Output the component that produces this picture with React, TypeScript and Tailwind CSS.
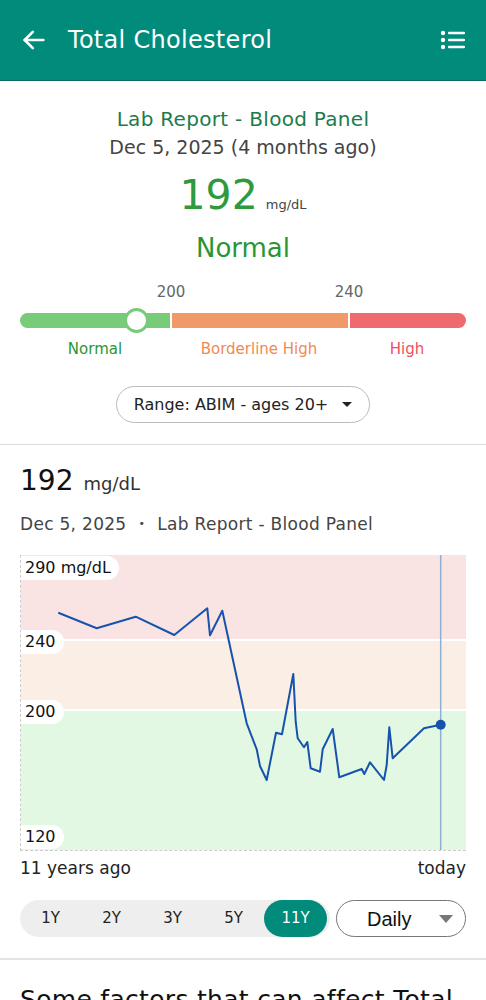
import React from "react";

const points: [number, number][] = [
  [58.3, 612.7], [96.7, 628.3], [135.7, 616.7], [174.3, 635], [207.3, 608.3],
  [210, 635.3], [222.3, 610.7], [246.7, 723.3], [256.7, 749.3], [260, 766],
  [266.7, 780], [276, 732.7], [282, 734.3], [293.3, 674], [295.7, 721.7],
  [297.7, 738.3], [304, 747.3], [307.3, 742], [310.7, 768.3], [320, 771.7],
  [322.7, 749.3], [332.7, 729], [339.3, 777.3], [361.7, 769], [364.3, 774],
  [370, 762.3], [384, 780], [386.7, 765], [389.3, 727.3], [392.7, 758.3],
  [424, 728.3], [440.7, 724.7],
];

const linePath = points
  .map(([x, y], i) => `${i === 0 ? "M" : "L"}${(x - 20).toFixed(1)} ${(y - 555).toFixed(1)}`)
  .join(" ");

const periods = ["1Y", "2Y", "3Y", "5Y", "11Y"];

const Header = () => (
  <div className="flex h-[81px] items-center justify-between border-b border-[#0b6e63] bg-[#008b7b] px-[20px] text-white">
    <div className="flex items-center gap-[20px]">
      <svg width="28" height="28" viewBox="0 0 24 24" fill="none" stroke="currentColor" strokeWidth="2.2" strokeLinecap="round" strokeLinejoin="round">
        <path d="M20 12H4" />
        <path d="M11 5l-7 7 7 7" />
      </svg>
      <span className="text-[24px] tracking-[0.3px]">Total Cholesterol</span>
    </div>
    <svg width="26" height="22" viewBox="0 0 26 22" fill="white">
      <circle cx="3" cy="4" r="2.2" />
      <circle cx="3" cy="11" r="2.2" />
      <circle cx="3" cy="18" r="2.2" />
      <rect x="8" y="2.8" width="17" height="2.5" rx="1" />
      <rect x="8" y="9.8" width="17" height="2.5" rx="1" />
      <rect x="8" y="16.8" width="17" height="2.5" rx="1" />
    </svg>
  </div>
);

const Summary = () => (
  <section className="flex flex-col items-center border-b border-[#dcdcdc] px-[20px] pb-[21px] pt-[24px]">
    <div className="text-[20px] leading-[28px] tracking-[0.3px] text-[#1d7b4b]">Lab Report - Blood Panel</div>
    <div className="text-[19px] leading-[28px] text-[#444]">Dec 5, 2025 (4 months ago)</div>
    <div className="mt-[6px] flex items-baseline gap-[8px] text-[#2f9a3c]">
      <span className="text-[41px] leading-[56px]">192</span>
      <span className="text-[13px] text-[#444]">mg/dL</span>
    </div>
    <div className="mt-[6px] text-[26px] leading-[38px] text-[#2a9633]">Normal</div>

    <div className="mt-[14px] w-full">
      <div className="relative h-[22px] text-[15px] text-[#666]">
        <span className="absolute left-[131px] w-[40px] text-center">200</span>
        <span className="absolute left-[309px] w-[40px] text-center">240</span>
      </div>
      <div className="relative mt-[10px] flex h-[15px] w-full gap-[2px]">
        <div className="w-[150px] rounded-l-full bg-[#78cb78]" />
        <div className="w-[176px] bg-[#f09a69]" />
        <div className="flex-1 rounded-r-full bg-[#ef6a6c]" />
        <div className="absolute left-[104px] top-[-5px] h-[25px] w-[25px] rounded-full border-[3px] border-[#78cb78] bg-white" />
      </div>
      <div className="mt-[11px] flex text-[15px] leading-[20px]">
        <div className="w-[150px] text-center text-[#2a9633]">Normal</div>
        <div className="w-[178px] text-center text-[#ef8a53]">Borderline High</div>
        <div className="flex-1 text-center text-[#ee5060]">High</div>
      </div>
    </div>

    <button className="mt-[27px] flex h-[37px] items-center gap-[14px] rounded-full border border-[#bbb] px-[17px] text-[16px] text-[#222]">
      <span>Range: ABIM - ages 20+</span>
      <svg width="10" height="6" viewBox="0 0 10 6" fill="#222">
        <path d="M0 0h10L5 5z" />
      </svg>
    </button>
  </section>
);

const Label = ({ top, children }: { top: string; children: React.ReactNode }) => (
  <div className={`absolute left-0 ${top} rounded-r-full bg-white py-[1px] pl-[4px] pr-[8px] text-[16px] leading-[22px] text-[#111]`}>
    {children}
  </div>
);

const Chart = () => (
  <div className="relative h-[296px] w-full border-b border-l border-dashed border-[#ccc]">
    <div className="flex h-full flex-col">
      <div className="h-[86px] border-b-2 border-white bg-[#f9e4e3]" />
      <div className="h-[70px] border-b-2 border-white bg-[#faeee5]" />
      <div className="flex-1 bg-[#e3f8e3]" />
    </div>
    <svg className="absolute left-[-1px] top-0" width="446" height="295" viewBox="0 0 446 295">
      <line x1="420.7" y1="0" x2="420.7" y2="295" stroke="#8fb0cf" strokeWidth="1.5" />
      <path d={linePath} fill="none" stroke="#1653ad" strokeWidth="2" strokeLinejoin="round" />
      <circle cx="420.7" cy="169.7" r="5" fill="#1653ad" />
    </svg>
    <Label top="top-[1px]">290 mg/dL</Label>
    <Label top="top-[75px]">240</Label>
    <Label top="top-[145px]">200</Label>
    <Label top="top-[270px]">120</Label>
  </div>
);

const Trend = () => (
  <section className="border-b-2 border-[#e4e4e4] px-[20px] pb-[21px] pt-[16px]">
    <div className="flex items-baseline gap-[10px]">
      <span className="text-[28px] leading-[40px] text-[#111]">192</span>
      <span className="text-[18px] text-[#333]">mg/dL</span>
    </div>
    <div className="mt-[11px] flex items-center gap-[12px] text-[17px] leading-[24px] tracking-[0.3px] text-[#444]">
      <span>Dec 5, 2025</span>
      <span className="text-[11px]">•</span>
      <span>Lab Report - Blood Panel</span>
    </div>
    <div className="mt-[19px]">
      <Chart />
    </div>
    <div className="mt-[5px] flex justify-between text-[17px] leading-[24px] text-[#222]">
      <span>11 years ago</span>
      <span>today</span>
    </div>
    <div className="mt-[20px] flex items-center gap-[6px]">
      <div className="flex h-[37px] w-[310px] items-center rounded-full bg-[#eeeeee] text-[15px] text-[#222]">
        {periods.map((p) => (
          <div
            key={p}
            className={
              p === "11Y"
                ? "flex h-full w-[63px] items-center justify-center rounded-full bg-[#008b7b] text-white"
                : "flex h-full w-[61px] items-center justify-center"
            }
          >
            {p}
          </div>
        ))}
      </div>
      <button
        className="flex h-[37px] flex-1 items-center justify-between rounded-full border border-[#777] pl-[30px] pr-[12px] text-[20px] text-[#111]"
        style={{ fontFamily: '"Liberation Sans", Arial, sans-serif' }}
      >
        <span>Daily</span>
        <svg width="14" height="8" viewBox="0 0 14 8" fill="#777">
          <path d="M0 0h14L7 8z" />
        </svg>
      </button>
    </div>
  </section>
);

export default function App() {
  return (
    <div
      className="h-[1000px] w-[486px] overflow-hidden bg-white"
      style={{ fontFamily: '"DejaVu Sans", "Noto Sans", sans-serif' }}
    >
      <Header />
      <Summary />
      <Trend />
      <div className="px-[20px] pt-[24px] text-[25px] leading-[32px] tracking-[0.3px] text-[#111]">
        Some factors that can affect Total Cholesterol
      </div>
    </div>
  );
}
